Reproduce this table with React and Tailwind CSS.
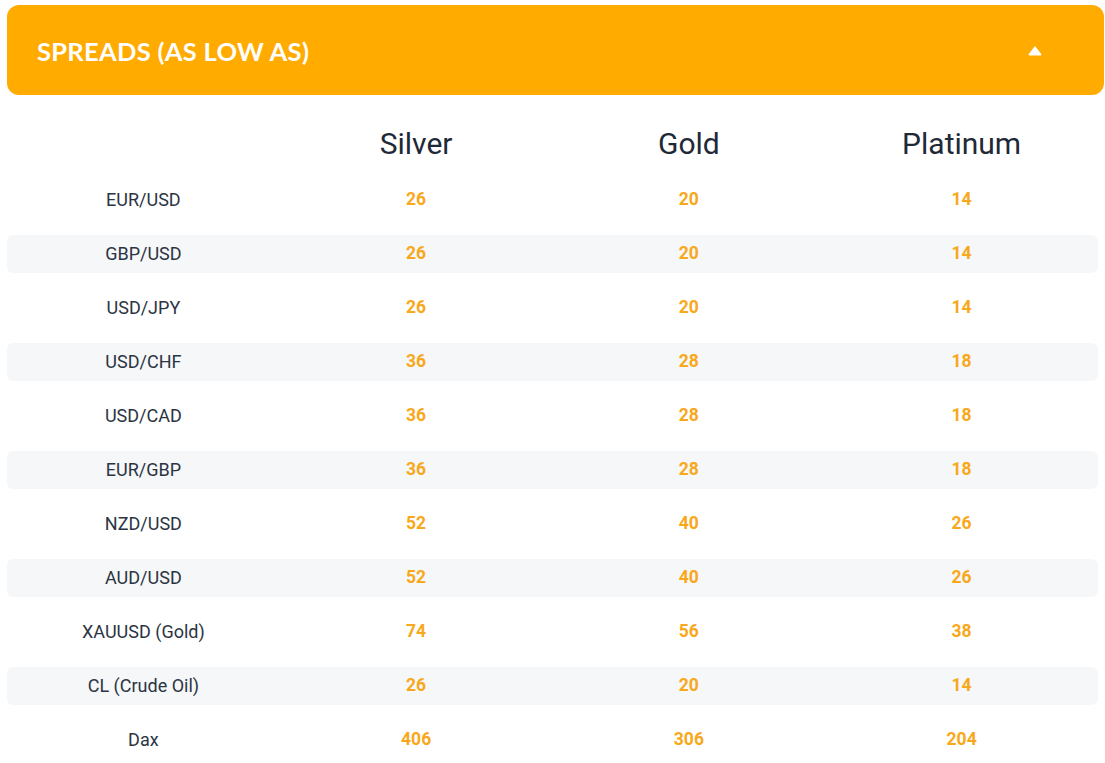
const rows = [
  ["EUR/USD", 26, 20, 14],
  ["GBP/USD", 26, 20, 14],
  ["USD/JPY", 26, 20, 14],
  ["USD/CHF", 36, 28, 18],
  ["USD/CAD", 36, 28, 18],
  ["EUR/GBP", 36, 28, 18],
  ["NZD/USD", 52, 40, 26],
  ["AUD/USD", 52, 40, 26],
  ["XAUUSD (Gold)", 74, 56, 38],
  ["CL (Crude Oil)", 26, 20, 14],
  ["Dax", 406, 306, 204],
];

export default function App() {
  return (
    <div className="w-[1105px] h-[763px] overflow-hidden bg-white font-['Roboto',sans-serif] pt-[5px] pl-[7px]">
      <div className="flex items-center justify-between h-[90px] w-[1097px] rounded-xl bg-[#ffab00] pl-[30px] pr-[62px]">
        <h2 className="font-['Lato',sans-serif] font-bold text-[25.5px] tracking-[0.3px] text-white mt-[2px]">
          SPREADS (AS LOW AS)
        </h2>
        <svg width="14" height="10" viewBox="0 0 14 10" className="mt-[1px]">
          <path d="M7 1.2 L12.6 8.6 H1.4 Z" fill="#fff" stroke="#fff" strokeWidth="1.6" strokeLinejoin="round" />
        </svg>
      </div>

      <div className="w-[1091px]">
        <div className="grid grid-cols-4 h-[86px] items-center pt-[14px] pb-[3px] text-[30px] text-[#1f2937]">
          <div />
          <div className="text-center">Silver</div>
          <div className="text-center">Gold</div>
          <div className="text-center">Platinum</div>
        </div>
        <div className="flex flex-col gap-4">
          {rows.map((r, i) => (
            <div
              key={r[0]}
              className={`grid grid-cols-4 h-[38px] items-center pb-[2px] rounded-md ${i % 2 === 1 ? "bg-[#f5f7f9]" : ""}`}
            >
              <div className="text-center text-[18px] text-[#2b3442]">{r[0]}</div>
              {r.slice(1).map((v, j) => (
                <div key={j} className="text-center text-[17.5px] font-bold text-[#f8a81a]">
                  {v}
                </div>
              ))}
            </div>
          ))}
        </div>
      </div>
    </div>
  );
}
